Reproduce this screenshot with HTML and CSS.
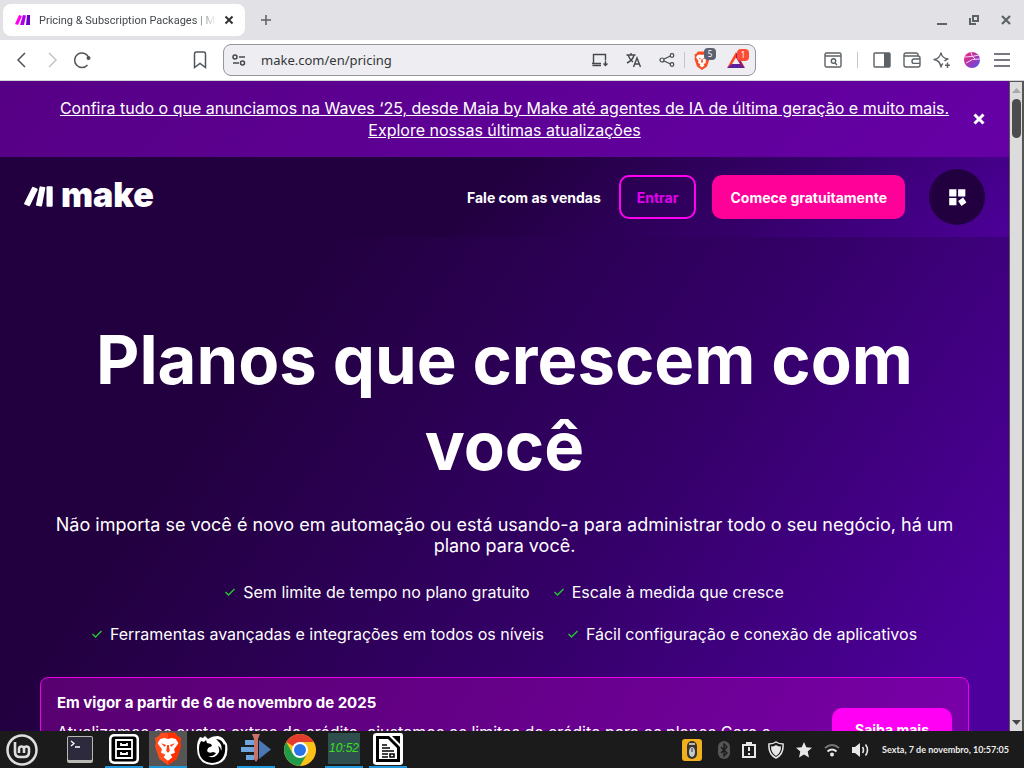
FILE: index.html
```
<!DOCTYPE html>
<html lang="pt-br">

<head>
    <meta charset="UTF-8">
    <meta name="viewport" content="width=device-width, initial-scale=1.0">
    <title>Pricing &amp; Subscription Packages | Make</title>
    <link rel="stylesheet" href="styles.css">
</head>
<body>
<!-- tabs -->
<header class="tabs">
    <div class="tab">
        <svg width="16" height="12" viewBox="0 0 16 12"><path d="M4 1l3 1-4 9-3-1z" fill="#ff00f0"/><path d="M8 1l3 .5L9 11H5z" fill="#b000e8"/><path d="M12 1h3v10h-4z" fill="#6d00cc"/></svg>
        <span class="tab-title">Pricing &amp; Subscription Packages | Make</span>
        <button class="icon" aria-label="Fechar aba"><svg width="10" height="10" viewBox="0 0 10 10" stroke="#333" stroke-width="2"><path d="M1.500 1.500l7 7M8.500 1.500l-7 7"/></svg></button>
    </div>
    <button class="icon new-tab" aria-label="Nova aba"><svg width="12" height="12" viewBox="0 0 12 12" stroke="#5c5f64" stroke-width="1.500"><path d="M6 1v10M1 6h10"/></svg></button>
    <div class="win">
        <button class="icon" aria-label="Minimizar"><svg width="12" height="12" viewBox="0 0 12 12"><path d="M1 9h10v2H1z" fill="#5c6266"/></svg></button>
        <button class="icon" aria-label="Restaurar"><svg width="12" height="12" viewBox="0 0 12 12" fill="none" stroke="#5c6266" stroke-width="2"><path d="M5 2h5v5H5zM2 4v6h6"/></svg></button>
        <button class="icon" aria-label="Fechar"><svg width="12" height="12" viewBox="0 0 12 12" stroke="#5c6266" stroke-width="2.200"><path d="M2 2l8 8M10 2l-8 8"/></svg></button>
    </div>
</header>

<!-- toolbar -->
<div class="toolbar">
    <div class="nav-left">
        <button class="icon" aria-label="Voltar"><svg width="20" height="20" viewBox="0 0 20 20" fill="none" stroke="#4f555b" stroke-width="1.500"><path d="M13 3l-7 7 7 7"/></svg></button>
        <button class="icon" aria-label="Avançar"><svg width="20" height="20" viewBox="0 0 20 20" fill="none" stroke="#c3c5c8" stroke-width="1.500"><path d="M7 3l7 7-7 7"/></svg></button>
        <button class="icon" aria-label="Recarregar"><svg width="20" height="20" viewBox="0 0 20 20" fill="none" stroke="#4f555b" stroke-width="1.500"><path d="M15.500 15A7.300 7.300 0 1 1 16.500 7"/><circle cx="16.500" cy="8" r="2" fill="#4f555b" stroke="none"/></svg></button>
    </div>
    <button class="icon bookmark" aria-label="Favoritos"><svg width="14" height="18" viewBox="0 0 14 18" fill="none" stroke="#4f555b" stroke-width="1.500"><path d="M1.500 3q0-2 2-2h7q2 0 2 2v13.500L7 12.500l-5.500 4z"/></svg></button>
    <div class="address">
        <svg width="14" height="14" viewBox="0 0 14 14" fill="none" stroke="#44494e" stroke-width="1.500"><circle cx="3" cy="4" r="2"/><path d="M7 4h6M1 10h6"/><circle cx="10.500" cy="10" r="2"/></svg>
        <input type="text" class="url" value="make.com/en/pricing" aria-label="Endereço">
        <button class="icon" aria-label="Instalar"><svg width="18" height="16" viewBox="0 0 18 16" fill="none" stroke="#44494e" stroke-width="1.400"><path d="M10 13.500H1.500M2.500 11V2.500h12V8M1 11.500h9M14.500 8.500v5M12.500 11.500l2 2 2-2"/></svg></button>
        <button class="icon" aria-label="Traduzir"><svg width="16" height="16" viewBox="0 0 16 16" fill="none" stroke="#44494e" stroke-width="1.400"><path d="M.500 3h9M5 1v2M2 3q2 5 5 7M8 3q-1 5-7 8M7.500 15l3.500-9 3.500 9M9 12h4"/></svg></button>
        <button class="icon" aria-label="Compartilhar"><svg width="16" height="16" viewBox="0 0 16 16" fill="none" stroke="#44494e" stroke-width="1.200"><circle cx="3" cy="8" r="2"/><circle cx="13" cy="3.500" r="1.800"/><circle cx="13" cy="12.500" r="1.800"/><path d="M5 7l6.500-3M5 9l6.500 3"/></svg></button>
        <span class="sep"></span>
        <button class="icon badged" aria-label="Brave Shields"><svg width="16" height="19" viewBox="0 0 32 38"><path d="M8 1h16l3 4 4 2-1 6 1 3-5 15-10 7-10-7L1 16l1-3-1-6 4-2z" fill="#fb4b20"/><path d="M7 8l5-1 4 1 4-1 5 1 3 5-5 7 1 4-5 2 2 3-5 4-5-4 2-3-5-2 1-4-5-7z" fill="#fff"/><path d="M9 13l5 2-2 2zM23 13l-5 2 2 2zM15 16h2l1 6-2 2-2-2z" fill="#fb4b20"/></svg><span class="badge">5</span></button>
        <button class="icon badged" aria-label="Brave Rewards"><svg width="18" height="16" viewBox="0 0 18 16"><path d="M9 0v5.500L4.500 13 0 16z" fill="#ff4724"/><path d="M0 16l4.500-4h9L18 16z" fill="#5d1f9a"/><path d="M9 0l9 16-4.500-3L9 5.500z" fill="#a3195b"/></svg><span class="badge red">1</span></button>
    </div>
    <div class="nav-right">
        <button class="icon" aria-label="Buscar"><svg width="18" height="16" viewBox="0 0 18 16" fill="none" stroke="#5c6266" stroke-width="1.400"><rect x="1" y="1" width="16" height="14" rx="1.500"/><path d="M1 4h16M11 11l2 2"/><circle cx="9.500" cy="9" r="2.200"/></svg></button>
        <span class="sep"></span>
        <button class="icon" aria-label="Barra lateral"><svg width="18" height="16" viewBox="0 0 18 16"><rect x="1" y="1" width="16" height="14" rx="1" fill="none" stroke="#5c6266" stroke-width="1.400"/><path d="M11 1h6v14h-6z" fill="#5c6266"/></svg></button>
        <button class="icon" aria-label="Carteira"><svg width="18" height="16" viewBox="0 0 18 16" fill="none" stroke="#5c6266" stroke-width="1.400"><path d="M15 4V3q0-2-2-2H3Q1 1 1 3v10q0 2 2 2h12q2 0 2-2V6q0-2-2-2H1M17 7h-6q-2 0-2 2.200t2 2.200h6"/></svg></button>
        <button class="icon" aria-label="Leo"><svg width="18" height="18" viewBox="0 0 18 18" fill="none" stroke="#5c6266" stroke-width="1.400" stroke-linejoin="round"><path d="M8 1.500Q8.500 7 15 8q-2 .500-3.500 2M10 12.500q-1.500 1-2 3.500Q7 9.500 1 8.500 7 7.500 8 1.500M14.500 11.500v5.500M12 14.200h5"/></svg></button>
        <button class="icon" aria-label="Perfil"><svg width="18" height="18" viewBox="0 0 18 18"><defs><linearGradient id="ball" x1="0" y1="0" x2="1" y2="1"><stop offset=".2" stop-color="#e0288c"/><stop offset="1" stop-color="#5050f0"/></linearGradient></defs><circle cx="9" cy="9" r="8" fill="url(#ball)"/><path d="M2 6q7 0 14-2M3 12q6-5 14-4M8 1q0 4 4 7" fill="none" stroke="#fbd4ee"/></svg></button>
        <button class="icon" aria-label="Menu"><svg width="18" height="16" viewBox="0 0 18 16" stroke="#777b80" stroke-width="2"><path d="M1 2h16M1 8h16M1 14h16"/></svg></button>
    </div>
</div>

<!-- page -->
<div class="view">
    <div class="page">
        <div class="promo">
            <a href="#">Confira tudo o que anunciamos na Waves ‘25, desde Maia by Make até agentes de IA de última geração e muito mais. Explore nossas últimas atualizações</a>
            <button class="icon promo-close" aria-label="Fechar"><svg width="12" height="12" viewBox="0 0 12 12" stroke="#fff" stroke-width="3"><path d="M1.500 1.500l9 9M10.500 1.500l-9 9"/></svg></button>
        </div>
        <nav class="menu">
            <a href="#" class="logo"><svg width="30" height="22" viewBox="0 0 30 22" fill="#fff"><path d="M8 1.500q.400-1 1.400-.500l3.600 1.600q1 .400.600 1.400L6 19.500q-.400 1-1.400.600L.800 18.500q-1-.500-.500-1.400zM15.500 1.200q.200-1 1.200-.800l3.800.700q1 .200.800 1.200L18 19.700q-.200 1-1.200.800l-4-.700q-1-.200-.800-1.200zM22.500 1.200q0-1 1-1h4.200q1 0 1 1v18.500q0 1-1 1h-4.200q-1 0-1-1z"/></svg><span>make</span></a>
            <a href="#" class="sales">Fale com as vendas</a>
            <button class="btn login">Entrar</button>
            <button class="btn start">Comece gratuitamente</button>
            <button class="round" aria-label="Menu do site"><svg width="20" height="20" viewBox="0 0 18 18" fill="#fff"><path d="M2 2h6.500v6.500H2zM10 2h6.500v6.500H10zM2 10h6.500v6.500H2zM14.500 9.500l3 4.500-4.500 3-3-4.500z"/></svg></button>
        </nav>
        <main class="hero">
            <h1>Planos que crescem com você</h1>
            <p class="lead">Não importa se você é novo em automação ou está usando-a para administrar todo o seu negócio, há um plano para você.</p>
            <ul class="features">
                <li><svg class="check" width="10" height="10" viewBox="0 0 10 10"><path d="M.500 5l3 3 6-6"/></svg>Sem limite de tempo no plano gratuito</li>
                <li><svg class="check" width="10" height="10" viewBox="0 0 10 10"><path d="M.500 5l3 3 6-6"/></svg>Escale à medida que cresce</li>
                <li><svg class="check" width="10" height="10" viewBox="0 0 10 10"><path d="M.500 5l3 3 6-6"/></svg>Ferramentas avançadas e integrações em todos os níveis</li>
                <li><svg class="check" width="10" height="10" viewBox="0 0 10 10"><path d="M.500 5l3 3 6-6"/></svg>Fácil configuração e conexão de aplicativos</li>
            </ul>
            <section class="notice">
                <div class="notice-text">
                    <h2>Em vigor a partir de 6 de novembro de 2025</h2>
                    <p>Atualizamos os custos extras de crédito, ajustamos os limites de crédito para os planos Core e</p>
                </div>
                <button class="btn more">Saiba mais</button>
            </section>
        </main>
    </div>
    <div class="scroll">
        <svg width="9" height="5" viewBox="0 0 9 5"><path d="M0 5l4.500-5L9 5z" fill="#a8a8a8"/></svg>
        <div class="thumb"></div>
        <svg width="9" height="5" viewBox="0 0 9 5"><path d="M0 0l4.500 5L9 0z" fill="#444"/></svg>
    </div>
</div>

<!-- taskbar -->
<footer class="taskbar">
    <button class="app mint" aria-label="Menu"><svg width="32" height="32" viewBox="0 0 32 32" fill="none" stroke="#dedede"><circle cx="16" cy="16" r="14.500" stroke-width="2.500"/><path d="M9 8v10q0 5 5 5h4q5 0 5-5v-3q0-2.500-2.500-2.500T18 15v4M18 15q0-2.500-2.500-2.500T13 15v4" stroke-width="2.600"/></svg></button>
    <button class="app" aria-label="Terminal"><svg width="26" height="27" viewBox="0 0 26 27"><rect width="26" height="27" rx="2" fill="#b9b9b2"/><rect x="1" y="1" width="24" height="23" rx="1" fill="#2e2a3e"/><path d="M4 5l3 2.500L4 10M8 11h5" fill="none" stroke="#fff" stroke-width="1.300"/></svg></button>
    <button class="app open" aria-label="Arquivos"><svg width="32" height="32" viewBox="0 0 32 32"><rect x="1" y="1" width="30" height="30" rx="5" fill="#fff"/><rect x="3.500" y="3.500" width="25" height="25" rx="3"/><path d="M8 7h16v18H8zM8 16h16M13 10v2h6v-2M13 19v2h6v-2" fill="none" stroke="#fff" stroke-width="1.800"/></svg></button>
    <button class="app open active" aria-label="Brave"><svg width="28" height="33" viewBox="0 0 32 38"><path d="M8 1h16l3 4 4 2-1 6 1 3-5 15-10 7-10-7L1 16l1-3-1-6 4-2z" fill="#ff4a1c"/><path d="M16 1h8l3 4 4 2-1 6 1 3-5 15-10 7z" fill="#ff3000"/><path d="M7 8l5-1 4 1 4-1 5 1 3 5-5 7 1 4-5 2 2 3-5 4-5-4 2-3-5-2 1-4-5-7z" fill="#fff"/><path d="M8 13l6 2-2 2zM24 13l-6 2 2 2zM15 15h2l1 7-2 2-2-2z" fill="#ff3d10"/></svg></button>
    <button class="app" aria-label="Firefox"><svg width="32" height="32" viewBox="0 0 32 32"><path d="M4 3l3 1 2-2 3 3q4-3 10-3 5 1 7 5l2 3q3 20-15 21Q1 30 1 14q0-7 3-11z" fill="#fff"/><path d="M5 7l3 1 2-2 1 3 4 1 1 2-4 2-1 3q2 3 6 1l3 1q-3 4-8 3 5 3 9-1 4-4 1-9 3 1 3 5 2-5-2-9l-3-3q6 0 8 6l1-1q2 18-13 19Q3 28 3 15q0-5 2-8z"/></svg></button>
    <button class="app open" aria-label="Xed"><svg width="32" height="30" viewBox="0 0 32 30"><path d="M5 6h9v5H5zM1 13h13v5H1zM6 21h8v5H6z" fill="#6fa5df"/><path d="M19 6l12 9.500L19 25z" fill="#4a78b4"/><path d="M12 0h8l-2 5v20l-2 3-2-3V5z" fill="#c8726b"/></svg></button>
    <button class="app" aria-label="Chrome"><svg width="32" height="32" viewBox="0 0 32 32"><circle cx="16" cy="16" r="16" fill="#fbc116"/><path d="M16 16L2.200 8A16 16 0 0 1 29.800 8H16z" fill="#e33b2e"/><path d="M2.200 8A16 16 0 0 0 16 32l7-12-14 0z" fill="#229a4b"/><circle cx="16" cy="16" r="8" fill="#fff"/><circle cx="16" cy="16" r="6" fill="#2a73e8"/></svg></button>
    <button class="app open" aria-label="Relógio"><span class="lcd">10:52</span></button>
    <button class="app open" aria-label="LibreOffice"><svg width="32" height="32" viewBox="0 0 32 32"><path d="M5 0h24q2 0 2 3v26q0 3-3 3H5q-4 0-4-3V3q0-3 4-3z" fill="#fff"/><path d="M4 3h13l11 11v15H4z"/><path d="M7 6h9l9 9v11H7z" fill="#fff"/><path d="M10 12h5M10 15h8M10 18h12M10 21h6M10 24h6M18 21h4v3h-4z" stroke="#000" stroke-width="1.600" fill="none"/><path d="M20 3h8v8z"/></svg></button>
    <div class="tray">
        <svg width="20" height="22" viewBox="0 0 20 22"><rect width="20" height="22" rx="3" fill="#f3b01e"/><rect x="5" y="2" width="10" height="18" rx="5" fill="#383430"/><path d="M7 5h6" stroke="#c5b5a3" stroke-width="2"/><ellipse cx="10" cy="13" rx="3" ry="5" fill="#c8ccd0"/><path d="M10 9v4" stroke="#333"/></svg>
        <svg class="bt" width="12" height="18" viewBox="0 0 12 18"><rect width="12" height="18" rx="6" fill="#555"/><path d="M3 6l6 6-3 3V3l3 3-6 6" fill="none" stroke="#1a1a1a" stroke-width="1.300"/></svg>
        <svg width="14" height="18" viewBox="0 0 14 18" fill="none" stroke="#e8e8e8" stroke-width="2"><path d="M1 4h12v12H1zM4 2h6M7 6v4M7 12v2"/></svg>
        <svg width="16" height="18" viewBox="0 0 16 18"><path d="M8 1q3 2 7 2 1 10-7 14Q0 13 1 3q4 0 7-2z" fill="none" stroke="#e8e8e8" stroke-width="1.500"/><path d="M8 4q2 1.500 5 1.500Q13 12 8 15 3 12 3 5.500 6 5.500 8 4z" fill="#e8e8e8"/></svg>
        <svg width="16" height="16" viewBox="0 0 16 16"><path d="M8 0l2.300 5.300 5.700.500-4.300 3.800L13 15.500 8 12.400 3 15.500l1.300-5.900L0 5.800l5.700-.500z" fill="#e8e8e8"/></svg>
        <svg width="16" height="14" viewBox="0 0 16 14" fill="none" stroke="#e8e8e8" stroke-width="2"><path d="M1 5q7-6 14 0" stroke="#777"/><path d="M3.500 8.500q4.500-4 9 0"/><circle cx="8" cy="11.500" r="1"/></svg>
        <svg width="18" height="16" viewBox="0 0 18 16"><path d="M0 5h3l5-4v14l-5-4H0z" fill="#e8e8e8"/><path d="M10.500 5q2 3 0 6M13.500 2.500q4 5.500 0 11" fill="none" stroke="#e8e8e8" stroke-width="1.600"/></svg>
        <span class="clock">Sexta, 7 de novembro, 10:57:05</span>
    </div>
</footer>
</body>

</html>
```

FILE: styles.css
```
*{
    margin:0;
    padding:0;
    box-sizing:border-box;
}
body{
    height:100vh;
    display:flex;
    flex-direction:column;
    overflow:hidden;
    background:#fff;
    font-family:Inter, "Liberation Sans", sans-serif;
}
svg{
    display:block;
    flex-shrink:0;
}
button{
    border:0;
    background:none;
    font-family:inherit;
    cursor:pointer;
}
.icon{
    display:flex;
    align-items:center;
    justify-content:center;
    flex-shrink:0;
}

/* tabs */
.tabs{
    height:40px;
    flex-shrink:0;
    display:flex;
    align-items:center;
    padding:0 12px 0 3px;
    background:#e2e1e6;
}
.tab{
    width:242px;
    height:32px;
    display:flex;
    align-items:center;
    gap:8px;
    padding:0 11px 0 12px;
    border-radius:8px;
    background:#fff;
}
.tab-title{
    flex:1;
    overflow:hidden;
    white-space:nowrap;
    font:11px Roboto, sans-serif;
    color:#44484c;
    -webkit-mask-image:linear-gradient(90deg, #000 88%, transparent);
    mask-image:linear-gradient(90deg, #000 88%, transparent);
}
.new-tab{
    margin-left:15px;
}
.win{
    display:flex;
    gap:20px;
    margin-left:auto;
}

/* toolbar */
.toolbar{
    height:41px;
    flex-shrink:0;
    display:flex;
    align-items:center;
    background:#fff;
    border-bottom:1px solid #d5d3da;
}
.nav-left{
    display:flex;
    gap:10px;
    padding-left:12px;
}
.bookmark{
    margin-left:101px;
}
.address{
    flex:1;
    height:32px;
    display:flex;
    align-items:center;
    gap:17px;
    margin:0 68px 0 16px;
    padding:0 10px 0 8px;
    border:1px solid #96949c;
    border-radius:8px;
    background:#eeedf2;
}
.url{
    flex:1;
    min-width:0;
    margin-left:-2px;
    border:0;
    outline:0;
    background:none;
    font:13px "Noto Sans", sans-serif;
    color:#33373b;
}
.sep{
    width:1px;
    height:16px;
    margin:0 -8px;
    background:#c4c4ca;
}
.badged{
    position:relative;
}
.badge{
    position:absolute;
    left:10px;
    top:-3px;
    width:12px;
    height:12px;
    border-radius:4px;
    background:#5c6070;
    color:#fff;
    font:8px/12px "Noto Sans", sans-serif;
}
.badge.red{
    background:#ff4c35;
}
.nav-right{
    display:flex;
    align-items:center;
    gap:12px;
    padding-right:13px;
}
.nav-right .sep{
    margin:0 3px;
}

/* page */
.view{
    flex:1;
    min-height:0;
    display:flex;
}
.page{
    flex:1;
    overflow:hidden;
    color:#fff;
    background:linear-gradient(125deg, #22003f 30%, #35006a 65%, #4e009c 95%);
}
.promo{
    position:relative;
    padding:16px 48px;
    text-align:center;
    font-size:16px;
    line-height:22px;
    background:linear-gradient(135deg, #560085, #6600a6);
}
.promo a{
    color:#fff;
}
.promo-close{
    position:absolute;
    right:24px;
    top:32px;
}
.menu{
    height:80px;
    display:flex;
    align-items:center;
    padding:0 24px;
    background:linear-gradient(135deg, #22003f 48%, #35006a 75%, #4c0098);
}
.logo{
    display:flex;
    align-items:center;
    gap:7px;
    margin-right:auto;
    color:#fff;
    font-size:34px;
    line-height:36px;
    font-weight:900;
    text-decoration:none;
}
.logo span{
    padding-bottom:5px;
}
.sales{
    margin-right:18px;
    color:#fff;
    font-size:14px;
    font-weight:700;
    text-decoration:none;
}
.btn{
    height:44px;
    border-radius:10px;
    font-size:14px;
    font-weight:700;
    color:#fff;
}
.login{
    padding:0 16px;
    border:2px solid #ff00f0;
    color:#e400ee;
}
.start{
    margin-left:16px;
    padding:0 18px;
    background:#ff0098;
}
.round{
    width:56px;
    height:56px;
    margin-left:24px;
    display:flex;
    align-items:center;
    justify-content:center;
    border-radius:50%;
    background:#22003f;
}

/* hero */
.hero{
    padding:80px 40px 0;
    text-align:center;
}
h1{
    font-size:67px;
    line-height:86px;
    font-weight:700;
}
.lead{
    margin-top:25px;
    font-size:18px;
    line-height:21px;
}
.features{
    display:flex;
    flex-wrap:wrap;
    justify-content:center;
    gap:22px 24px;
    margin:26px 40px 0;
    list-style:none;
}
.features li{
    display:flex;
    align-items:center;
    gap:8px;
    font-size:16px;
    line-height:20px;
}
.check{
    fill:none;
    stroke:#22c52f;
    stroke-width:1.5;
}
.notice{
    display:flex;
    justify-content:space-between;
    margin-top:33px;
    padding:13px 16px;
    border:1px solid #f000e8;
    border-radius:8px;
    text-align:left;
    background:linear-gradient(120deg, #580070, #66008a 50%, #7a00aa);
}
.notice h2{
    font-size:15px;
    line-height:24px;
}
.notice p{
    margin-top:5px;
    font-size:16px;
    line-height:24px;
}
.notice-text{
    max-width:730px;
}
.more{
    width:120px;
    height:42px;
    margin-top:17px;
    background:#ff00f4;
}

/* scrollbar */
.scroll{
    width:15px;
    flex-shrink:0;
    display:flex;
    flex-direction:column;
    align-items:center;
    padding:6px 0;
    border:1px solid #555;
    border-width:1px 2px 0 1px;
    background:#dcdcdc;
}
.thumb{
    width:9px;
    height:39px;
    margin:6px 0 auto;
    border-radius:5px;
    background:#4c4c4c;
}

/* taskbar */
.taskbar{
    height:37px;
    flex-shrink:0;
    display:flex;
    align-items:center;
    padding:0 15px 0 3px;
    background:#1b1b1b;
}
.app{
    width:38px;
    height:37px;
    margin-right:6px;
    display:flex;
    align-items:center;
    justify-content:center;
}
.mint{
    margin-right:20px;
}
.open{
    border-bottom:2px solid #2196d8;
}
.active{
    background:#555;
}
.lcd{
    width:32px;
    height:31px;
    background:#2f4f4f;
    color:#3be01c;
    font:italic 12px/30px "Liberation Sans", sans-serif;
}
.tray{
    display:flex;
    align-items:center;
    gap:12px;
    margin-left:auto;
}
.bt{
    margin-left:4px;
}
.clock{
    color:#eee;
    font:700 9px Lato, sans-serif;
    white-space:nowrap;
}
```
